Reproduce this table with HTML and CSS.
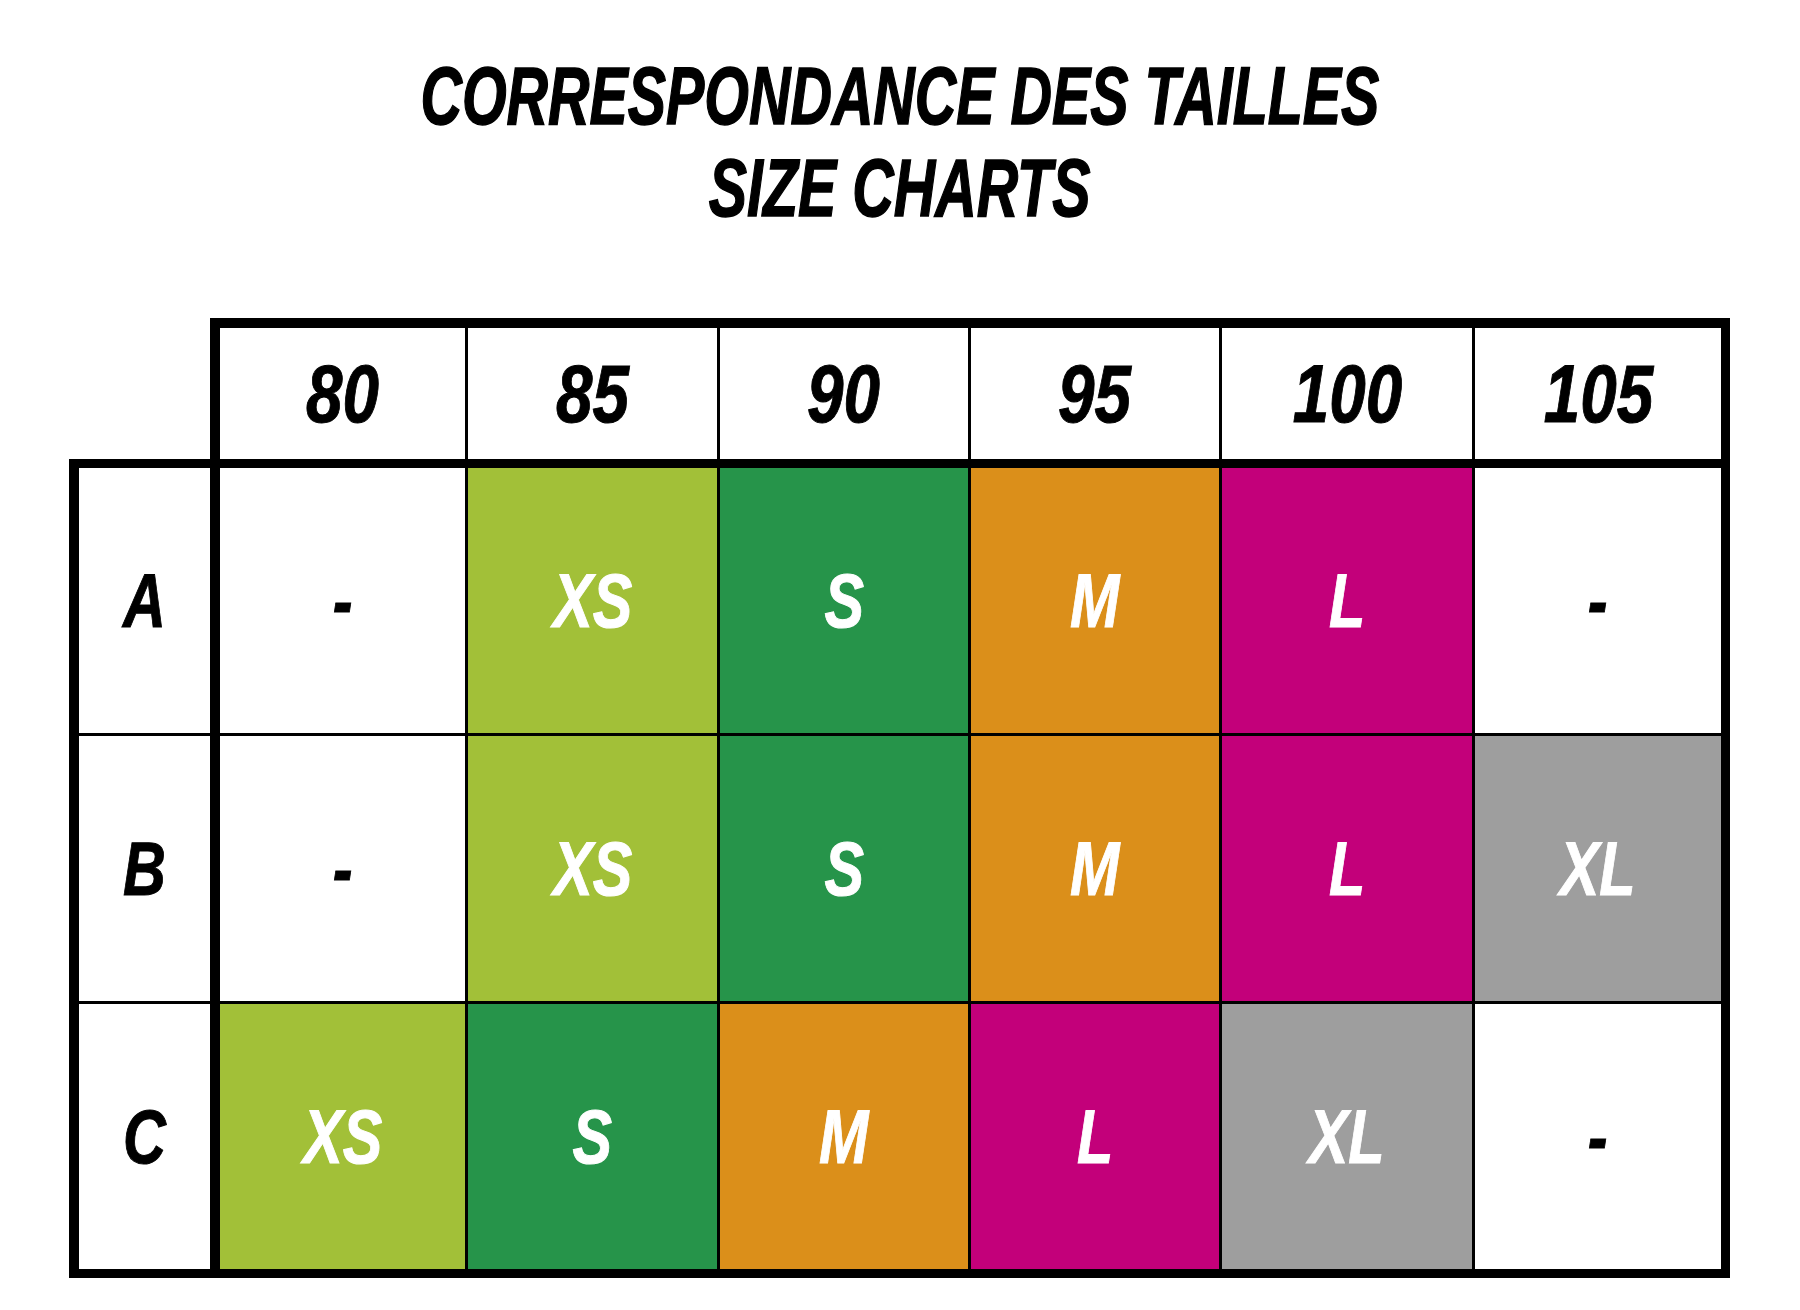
FILE: index.html
```html
<!DOCTYPE html>
<html lang="fr">
<head>
<meta charset="utf-8">
<title>Correspondance des tailles</title>
<link rel="stylesheet" href="styles.css">
</head>
<body>
<div class="page">
  <h1 class="title"><span class="line">CORRESPONDANCE DES TAILLES</span><span class="line">SIZE CHARTS</span></h1>
  <div class="chart">
    <div class="head">
      <div class="hcell"><span class="t">80</span></div>
      <div class="hcell"><span class="t">85</span></div>
      <div class="hcell"><span class="t">90</span></div>
      <div class="hcell"><span class="t">95</span></div>
      <div class="hcell"><span class="t">100</span></div>
      <div class="hcell"><span class="t">105</span></div>
    </div>
    <div class="body">
      <div class="labels">
        <div class="lab"><span class="t">A</span></div>
        <div class="lab"><span class="t">B</span></div>
        <div class="lab"><span class="t">C</span></div>
      </div>
      <div class="grid">
        <div class="cell empty"><span class="t">-</span></div>
        <div class="cell xs"><span class="t">XS</span></div>
        <div class="cell s"><span class="t">S</span></div>
        <div class="cell m"><span class="t">M</span></div>
        <div class="cell l"><span class="t">L</span></div>
        <div class="cell empty"><span class="t">-</span></div>

        <div class="cell empty"><span class="t">-</span></div>
        <div class="cell xs"><span class="t">XS</span></div>
        <div class="cell s"><span class="t">S</span></div>
        <div class="cell m"><span class="t">M</span></div>
        <div class="cell l"><span class="t">L</span></div>
        <div class="cell xl"><span class="t">XL</span></div>

        <div class="cell xs"><span class="t">XS</span></div>
        <div class="cell s"><span class="t">S</span></div>
        <div class="cell m"><span class="t">M</span></div>
        <div class="cell l"><span class="t">L</span></div>
        <div class="cell xl"><span class="t">XL</span></div>
        <div class="cell empty"><span class="t">-</span></div>
      </div>
    </div>
  </div>
</div>
</body>
</html>
```

FILE: styles.css
```css
html, body {
  margin: 0;
  padding: 0;
  background: #fff;
}

.page {
  width: 1800px;
  padding-top: 50px;
  font-family: "Liberation Sans", Arial, sans-serif;
  font-weight: 700;
  font-style: italic;
  color: #000;
}

.title {
  margin: 0;
  display: flex;
  flex-direction: column;
  align-items: center;
  font-size: 82px;
  line-height: 92px;
  font-weight: 700;
}

.line {
  display: block;
  transform: scaleX(0.7);
  -webkit-text-stroke: 1.5px #000;
}

.t {
  display: inline-block;
  -webkit-text-stroke: 1px currentColor;
}

.chart {
  margin-top: 84px;
  margin-left: 69px;
  width: 1661px;
}

.head {
  margin-left: 141px;
  display: grid;
  grid-template-columns: 245px 249px 248px 248px 250px 246px;
  grid-template-rows: 131px;
  gap: 3px;
  background: #000;
  border: 10px solid #000;
  border-right-width: 9px;
  border-bottom: 0;
}

.hcell {
  background: #fff;
  display: flex;
  align-items: center;
  justify-content: center;
  font-size: 82px;
}

.hcell .t {
  transform: scaleX(0.8);
}

.body {
  display: flex;
  border: 9px solid #000;
  border-left-width: 10px;
}

.labels {
  width: 131px;
  border-right: 10px solid #000;
  display: grid;
  grid-template-rows: repeat(3, 265px);
  gap: 3px;
  background: #000;
}

.lab {
  background: #fff;
  display: flex;
  align-items: center;
  justify-content: center;
  font-size: 76px;
}

.lab .t,
.cell .t {
  transform: scaleX(0.78);
}

.grid {
  flex: 1;
  display: grid;
  grid-template-columns: 245px 249px 248px 248px 250px 246px;
  grid-template-rows: repeat(3, 265px);
  gap: 3px;
  background: #000;
}

.cell {
  display: flex;
  align-items: center;
  justify-content: center;
  font-size: 76px;
  color: #fff;
}

.cell.empty {
  background: #fff;
  color: #000;
}

.xs { background: #a2c038; }
.s  { background: #26944a; }
.m  { background: #db8f1a; }
.l  { background: #c3007a; }
.xl { background: #9e9e9e; }
```
